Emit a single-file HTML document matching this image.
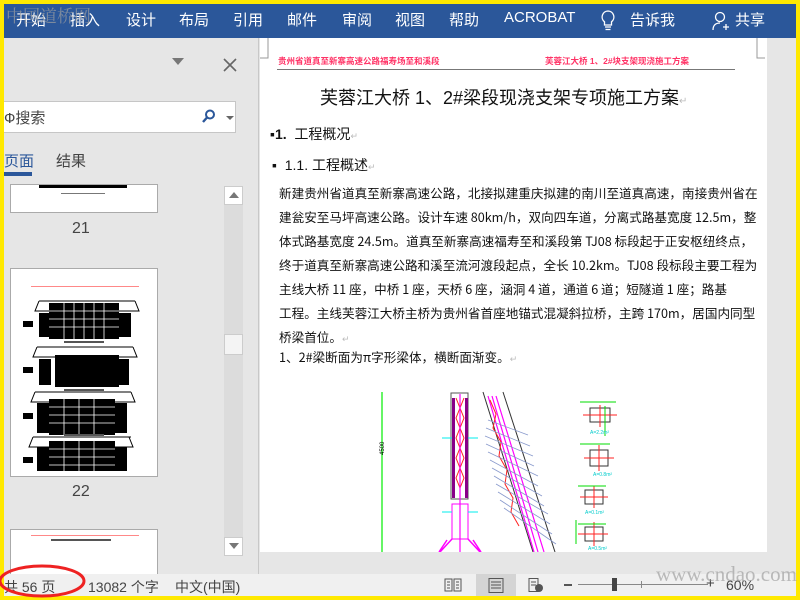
<!DOCTYPE html>
<html><head><meta charset="utf-8"><style>
*{margin:0;padding:0;box-sizing:border-box}
body{width:800px;height:600px;position:relative;overflow:hidden;background:#ffe900;font-family:"Liberation Sans","Noto Sans CJK SC",sans-serif}
.a{position:absolute}
#rib{left:4px;top:4px;width:792px;height:34px;background:#2b579a;color:#fff;font-size:15px}
#rib span{position:absolute;top:5px}
#left{left:4px;top:38px;width:254px;height:536px;background:#e6e6e6}
#docbg{left:258px;top:38px;width:519px;height:536px;background:#e6e6e6;border-left:1px solid #c8c8c8}
#page{left:260px;top:38px;width:507px;height:514px;background:#fff;overflow:hidden}
#rsb{left:777px;top:38px;width:19px;height:536px;background:#e6e6e6}
#status{left:4px;top:574px;width:792px;height:22px;background:#f0f0f0;font-size:14px;color:#444}
.ln{position:absolute;left:19px;width:439px;font-size:12.6px;color:#111;text-align:justify;text-align-last:justify;white-space:nowrap;line-height:16px;font-family:"Noto Sans CJK SC",sans-serif}
.ln.l{text-align-last:left}
.thumb{position:absolute;left:6px;width:148px;background:#fff;border:1px solid #aaa}
</style></head><body>
<div id="rib" class="a">
<span style="left:12px">开始</span><span style="left:66px">插入</span><span style="left:122px">设计</span><span style="left:175px">布局</span><span style="left:229px">引用</span><span style="left:283px">邮件</span><span style="left:338px">审阅</span><span style="left:391px">视图</span><span style="left:445px">帮助</span><span style="left:500px">ACROBAT</span>
<svg class="a" style="left:596px;top:5px" width="16" height="24"><path d="M8 2a6 6 0 0 0-3.5 10.8V16h7v-3.2A6 6 0 0 0 8 2zM5 18h6M5.5 20.5h5" stroke="#fff" stroke-width="1.3" fill="none"/></svg>
<span style="left:626px">告诉我</span>
<svg class="a" style="left:708px;top:6px" width="18" height="22"><circle cx="8" cy="7" r="4.5" stroke="#fff" stroke-width="1.3" fill="none"/><path d="M1 20c0-5 3-7 7-7M11 17h6M14 14v6" stroke="#fff" stroke-width="1.3" fill="none"/></svg>
<span style="left:731px">共享</span>
<span style="left:2px;top:-2px;color:rgba(160,160,160,.7);font-family:'Noto Serif CJK SC',serif;font-size:17px">中国道桥网</span>
</div>
<div id="left" class="a">
<svg class="a" style="left:168px;top:20px" width="12" height="8"><path d="M0 0h12L6 7z" fill="#777"/></svg>
<svg class="a" style="left:219px;top:20px" width="14" height="14"><path d="M1 1l12 12M13 1L1 13" stroke="#666" stroke-width="1.6"/></svg>
<div class="a" style="left:0;top:63px;width:232px;height:32px;background:#fff;border:1px solid #c6c6c6;border-left:none"></div>
<span class="a" style="left:0;top:69px;font-size:15px;color:#444">Ф搜索</span>
<svg class="a" style="left:198px;top:71px" width="14" height="14"><circle cx="8" cy="5.5" r="4" stroke="#2b579a" stroke-width="2" fill="none"/><path d="M5 8.5L1 13" stroke="#2b579a" stroke-width="2.4"/></svg>
<svg class="a" style="left:222px;top:78px" width="8" height="5"><path d="M0 0h8L4 4z" fill="#666"/></svg>
<span class="a" style="left:0;top:112px;font-size:15px;color:#2b579a">页面</span>
<span class="a" style="left:52px;top:112px;font-size:15px;color:#444">结果</span>
<div class="a" style="left:0;top:134px;width:28px;height:4px;background:#2b579a"></div>
<div class="thumb" style="top:146px;height:29px"><div class="a" style="left:28px;top:0;width:88px;height:3px;background:#000"></div><div class="a" style="left:50px;top:8px;width:44px;height:1px;background:#777"></div></div>
<span class="a" style="left:68px;top:182px;font-size:16px;color:#444">21</span>
<div class="thumb" style="top:230px;height:209px">
<div class="a" style="left:20px;top:17px;width:108px;height:1px;background:#f88"></div>
<svg class="a" style="left:8px;top:22px" width="134" height="180">
<g fill="none" stroke="#000"><path d="M20 10h96M18 56h96M16 101h96M14 146h98"/><path d="M20 10l-4 10h104l-4-10M18 56l-4 10h104l-4-10M16 101l-4 10h104l-4-10M14 146l-4 10h104l-4-10"/></g>
<g fill="#000">
<rect x="30" y="12" width="70" height="36"/><rect x="36" y="64" width="64" height="32"/><rect x="30" y="108" width="66" height="36"/><rect x="30" y="150" width="66" height="30"/>
<rect x="20" y="22" width="10" height="24"/><rect x="100" y="22" width="12" height="24"/><rect x="20" y="68" width="12" height="26"/><rect x="98" y="68" width="12" height="26"/><rect x="18" y="112" width="12" height="30"/><rect x="96" y="112" width="12" height="30"/><rect x="18" y="156" width="12" height="24"/><rect x="96" y="156" width="12" height="24"/>
<rect x="4" y="30" width="10" height="6"/><rect x="4" y="76" width="10" height="6"/><rect x="4" y="122" width="10" height="6"/><rect x="4" y="166" width="10" height="6"/>
</g>
<g stroke="#fff" stroke-width=".8"><path d="M30 20h70M30 28h70M30 36h70M30 116h66M30 124h66M30 132h66M30 158h66M30 166h66M30 174h66M45 12v36M55 12v36M65 12v36M75 12v36M85 12v36M45 108v36M60 108v36M75 108v36M45 150v30M60 150v30M75 150v30"/></g>
<g fill="#555"><rect x="45" y="50" width="40" height="2"/><rect x="45" y="98" width="40" height="2"/><rect x="45" y="143" width="40" height="2"/></g>
</svg></div>
<span class="a" style="left:68px;top:445px;font-size:16px;color:#444">22</span>
<div class="thumb" style="top:491px;height:50px"><div class="a" style="left:20px;top:5px;width:108px;height:1px;background:#f88"></div><div class="a" style="left:40px;top:9px;width:60px;height:2px;background:#555"></div></div>
<div class="a" style="left:220px;top:148px;width:19px;height:370px;background:#dcdcdc"></div>
<div class="a" style="left:220px;top:148px;width:19px;height:19px;background:#fff;border:1px solid #ccc"></div>
<svg class="a" style="left:225px;top:154px" width="10" height="6"><path d="M0 6h10L5 0z" fill="#777"/></svg>
<div class="a" style="left:220px;top:296px;width:19px;height:21px;background:#f4f4f4;border:1px solid #ccc"></div>
<div class="a" style="left:220px;top:499px;width:19px;height:19px;background:#fff;border:1px solid #ccc"></div>
<svg class="a" style="left:225px;top:505px" width="10" height="6"><path d="M0 0h10L5 6z" fill="#777"/></svg>
</div>
<div id="docbg" class="a"></div>
<div id="page" class="a">
<svg class="a" style="left:0;top:0" width="507" height="30"><path d="M0 20h8v-20M505 20h-8v-20" stroke="#999" fill="none"/></svg>
<span class="a" style="left:18px;top:17px;font-size:8.5px;color:#f36;font-weight:bold;white-space:nowrap">贵州省道真至新寨高速公路福寿场至和溪段</span>
<span class="a" style="left:285px;top:17px;font-size:8.5px;color:#f36;font-weight:bold;white-space:nowrap">芙蓉江大桥 1、2#块支架现浇施工方案</span>
<div class="a" style="left:17px;top:31px;width:458px;height:1px;background:#777"></div>
<span class="a" style="left:60px;top:46px;font-size:18px;color:#111;white-space:nowrap">芙蓉江大桥 1、2#梁段现浇支架专项施工方案<span style="color:#bbb;font-size:10px">↵</span></span>
<span class="a" style="left:10px;top:86px;font-size:14px;color:#111;white-space:nowrap">▪<b>1.</b>&nbsp; 工程概况<span style="color:#bbb;font-size:9px">↵</span></span>
<span class="a" style="left:12px;top:117px;font-size:14px;color:#111;white-space:nowrap">▪&nbsp; 1.1. 工程概述<span style="color:#bbb;font-size:9px">↵</span></span>
<div class="ln" style="top:147px">新建贵州省道真至新寨高速公路，北接拟建重庆拟建的南川至道真高速，南接贵州省在</div>
<div class="ln" style="top:171px">建瓮安至马坪高速公路。设计车速 80km/h，双向四车道，分离式路基宽度 12.5m，整</div>
<div class="ln" style="top:195px">体式路基宽度 24.5m。道真至新寨高速福寿至和溪段第 TJ08 标段起于正安枢纽终点，</div>
<div class="ln" style="top:219px">终于道真至新寨高速公路和溪至流河渡段起点，全长 10.2km。TJ08 段标段主要工程为</div>
<div class="ln" style="top:243px">主线大桥 11 座，中桥 1 座，天桥 6 座，涵洞 4 道，通道 6 道；短隧道 1 座；路基</div>
<div class="ln" style="top:267px">工程。主线芙蓉江大桥主桥为贵州省首座地锚式混凝斜拉桥，主跨 170m，居国内同型</div>
<div class="ln l" style="top:291px">桥梁首位。<span style="color:#bbb;font-size:9px">↵</span></div>
<div class="ln l" style="top:311px">1、2#梁断面为π字形梁体，横断面渐变。<span style="color:#bbb;font-size:9px">↵</span></div>
<svg class="a" style="left:0;top:342px" width="507" height="172">
<path d="M122 12v160" stroke="#0e0" stroke-width="1.2"/>
<text x="124" y="75" font-size="6" fill="#000" transform="rotate(-90 124 75)">4500</text>
<rect x="191" y="13" width="17" height="106" fill="#fff" stroke="#555"/>
<rect x="192" y="18" width="3" height="100" fill="#808"/><rect x="205" y="18" width="3" height="100" fill="#808"/>
<path d="M196 18l4 10-4 10 4 10-4 10 4 10-4 10 4 10-4 10 4 10M204 18l-4 10 4 10-4 10 4 10-4 10 4 10-4 10 4 10-4 10" stroke="#f22" fill="none" stroke-width="1"/>
<path d="M200 14v158" stroke="#f0f" stroke-width="1.2"/>
<rect x="192" y="124" width="16" height="35" fill="none" stroke="#f0f"/>
<path d="M192 159l-12 13M208 159l12 13M187 160l-8 12M213 160l8 12" stroke="#f0f" stroke-width="1.5"/>
<path d="M182 58h10M208 58h10M182 132h10M208 132h10" stroke="#0ee"/>
<path d="M223 12l50 160M243 12l52 160" stroke="#333"/>
<path d="M228 16l46 156M236 16l48 156M232 16l46 156" stroke="#f0f" stroke-width="1.2"/>
<path d="M230 20l6 14-3 14 8 14-2 14 8 14-2 14 8 14-2 14 8 14" stroke="#f22" fill="none"/>
<g stroke="#8899cc" stroke-width=".8"><path d="M228 40l40 15M226 48l44 18M225 56l48 20M226 64l48 22M228 72l50 24M230 80l48 26M232 88l50 28M234 96l50 30M236 104l52 30M238 112l52 32M240 120l52 34M244 128l52 36"/></g>
<g stroke="#333" fill="none"><rect x="330" y="28" width="20" height="14"/><rect x="330" y="70" width="18" height="16"/><rect x="325" y="110" width="18" height="14"/><rect x="325" y="147" width="18" height="14"/></g>
<g stroke="#f22"><path d="M323 35h34M340 25v22M324 78h30M339 65v26M320 117h28M334 106v22M318 154h30M334 142v24"/></g>
<g stroke="#0d0"><path d="M320 22h36M345 26v30M320 64h30M318 106h28M318 144h28M316 140v24"/></g>
<g fill="#0cc" font-size="5"><text x="330" y="54">A=2.2m²</text><text x="333" y="96">A=0.8m²</text><text x="325" y="134">A=0.1m²</text><text x="328" y="170">A=0.5m²</text></g>
</svg>
</div>
<div id="rsb" class="a"></div>
<div id="status" class="a">
<span class="a" style="left:0;top:3px">共 56 页</span>
<span class="a" style="left:84px;top:3px">13082 个字</span>
<span class="a" style="left:171px;top:3px">中文(中国)</span>
<svg class="a" style="left:440px;top:4px" width="18" height="14"><path d="M1 1h7v12H1zM10 1h7v12h-7zM3 4h3M3 7h3M3 10h3M12 4h3M12 7h3M12 10h3" stroke="#555" fill="none"/></svg>
<div class="a" style="left:472px;top:0;width:40px;height:22px;background:#d4d4d4"></div>
<svg class="a" style="left:484px;top:4px" width="16" height="15"><path d="M1 .5h14v14H1zM3 4h10M3 7h10M3 10h10" stroke="#555" fill="none"/></svg>
<svg class="a" style="left:524px;top:4px" width="16" height="15"><path d="M1 .5h9v13H1zM3 4h5M3 7h5" stroke="#555" fill="none"/><circle cx="11" cy="10" r="4" fill="#555"/></svg>
<div class="a" style="left:560px;top:10px;width:8px;height:2px;background:#555"></div>
<div class="a" style="left:574px;top:10px;width:130px;height:1px;background:#888"></div>
<div class="a" style="left:608px;top:4px;width:5px;height:13px;background:#444"></div>
<div class="a" style="left:637px;top:7px;width:1px;height:7px;background:#888"></div>
<span class="a" style="left:702px;top:1px;font-size:15px">+</span>
<span class="a" style="left:722px;top:3px">60%</span>
<span class="a" style="left:652px;top:-12px;font-family:'Liberation Serif',serif;font-size:21px;color:rgba(140,140,140,.55)">www.cndao.com</span>
</div>
<svg class="a" style="left:0;top:560px" width="100" height="40"><ellipse cx="42" cy="21" rx="42" ry="15" stroke="#e22" stroke-width="3" fill="none"/></svg>
</body></html>
